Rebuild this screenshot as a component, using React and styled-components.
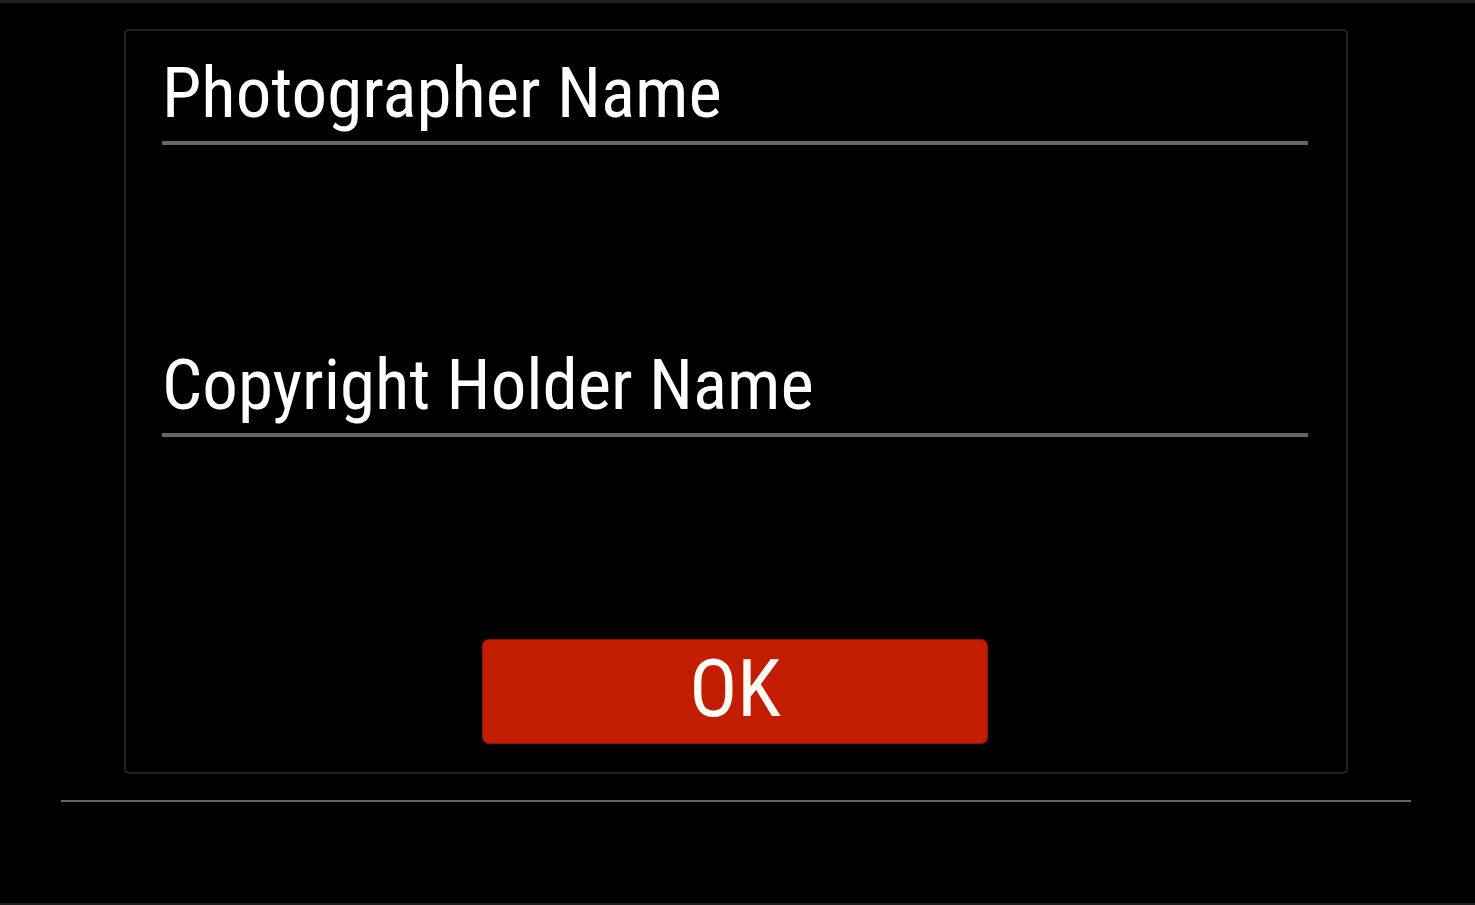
import React from "react";
import styled, { createGlobalStyle } from "styled-components";

const GlobalStyle = createGlobalStyle`
  * { box-sizing: border-box; }
  body {
    margin: 0;
    background: #000;
    color: #fff;
    font-family: "Roboto Condensed", "Liberation Sans Narrow", Roboto, sans-serif;
  }
`;

const Screen = styled.main`
  min-height: 100vh;
  border-top: 3px solid #1f1f1f;
  border-bottom: 2px solid #1f1f1f;
  padding: 26px 64px 0 61px;
`;

const Panel = styled.form`
  margin: 0 63px;
  padding: 22px 38px 28px 36px;
  border: 2px solid #222;
  border-radius: 5px;
  display: flex;
  flex-direction: column;
`;

const Field = styled.div`
  display: flex;
  flex-direction: column;
`;

const FieldLabel = styled.label`
  height: 92px;
  border-bottom: 4px solid #666;
  font-size: 71px;
  line-height: 80px;
  white-space: nowrap;
`;

const FieldInput = styled.input`
  width: 100%;
  height: 200px;
  padding: 0;
  border: 0;
  outline: 0;
  background: transparent;
  color: inherit;
  font-family: inherit;
  font-size: 71px;
`;

const OkButton = styled.button`
  align-self: center;
  width: 506px;
  max-width: 100%;
  height: 105px;
  margin-top: 2px;
  padding: 0 0 6px;
  border: 1px solid #8c1500;
  border-radius: 7px;
  background: #c31d00;
  color: #fffdf8;
  font-family: inherit;
  font-size: 80px;
  line-height: 96px;
`;

const Divider = styled.hr`
  margin: 26px 0 0;
  border: 0;
  height: 2px;
  background: #666;
`;

export default function App() {
  return (
    <>
      <GlobalStyle />
      <Screen>
        <Panel>
          <Field>
            <FieldLabel htmlFor="photographer">Photographer Name</FieldLabel>
            <FieldInput id="photographer" type="text" />
          </Field>
          <Field>
            <FieldLabel htmlFor="copyright">Copyright Holder Name</FieldLabel>
            <FieldInput id="copyright" type="text" />
          </Field>
          <OkButton type="button">OK</OkButton>
        </Panel>
        <Divider />
      </Screen>
    </>
  );
}
